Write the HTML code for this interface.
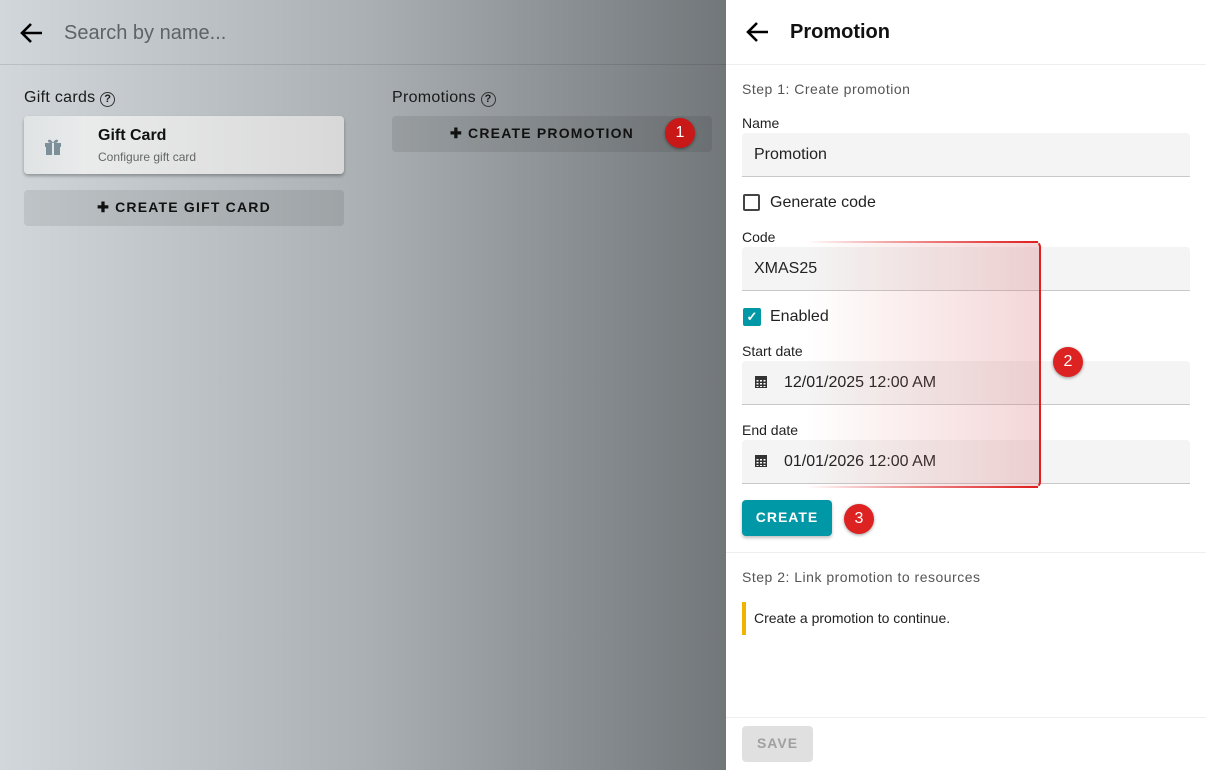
<!DOCTYPE html>
<html><head><style>
*{box-sizing:border-box;margin:0;padding:0}
body{width:1206px;height:770px;overflow:hidden;font-family:"Liberation Sans",Roboto,sans-serif;position:relative;background:#fff}
.left{position:absolute;left:0;top:0;width:726px;height:770px;background:linear-gradient(90deg,#d1d7da 0%,#aab0b3 50%,#72777a 100%)}
.abs{position:absolute}
.btnflat{position:absolute;background:rgba(0,0,0,0.08);border-radius:4px;font-size:14px;font-weight:bold;letter-spacing:1.2px;color:#111;text-align:center}
.right{position:absolute;left:726px;top:0;width:480px;height:770px;background:#fff}
.lbl{position:absolute;left:16px;font-size:14px;color:#222}
.inp{position:absolute;left:16px;width:448px;height:44px;background:#f4f4f4;border-bottom:1px solid #c8c8c8;border-radius:4px 4px 0 0;font-size:16px;color:#222;padding:13px 12px}
.badge{position:absolute;width:30px;height:30px;border-radius:50%;background:#d42222;color:#fff;font-size:16px;text-align:center;line-height:30px;box-shadow:0 1px 3px rgba(0,0,0,.4)}
.q{border:1.5px solid #333;border-radius:50%;display:inline-block;width:15px;height:15px;line-height:12px;text-align:center;font-size:11px;font-weight:bold;vertical-align:0px}
.cal{display:inline-block;vertical-align:-2px;margin-right:16px}
</style></head><body>
<div class="left">
 <svg class="abs" style="left:20px;top:22px" width="24" height="22" viewBox="0 0 24 22"><path d="M22 11H3M11 2L2 11l9 9" stroke="#000" stroke-width="2.6" fill="none"/></svg>
 <div class="abs" style="left:64px;top:22px;font-size:20px;color:#5d6366">Search by name...</div>
 <div class="abs" style="left:0;top:64px;width:726px;height:1px;background:rgba(0,0,0,0.1)"></div>
 <div class="abs" style="left:24px;top:89px;font-size:16px;color:#1a1a1a;letter-spacing:.3px">Gift cards <span class="q">?</span></div>
 <div class="abs" style="left:392px;top:89px;font-size:16px;color:#1a1a1a;letter-spacing:.3px">Promotions <span class="q">?</span></div>
 <div class="abs" style="left:24px;top:116px;width:320px;height:58px;border-radius:4px;background:linear-gradient(90deg,#eeefef,#d8d8d8);box-shadow:0 2px 3px rgba(0,0,0,.3);overflow:hidden">
  <div class="abs" style="left:0;top:0;width:58px;height:58px;background:linear-gradient(90deg,#e0e3e4,#e8eaeb)"></div>
  <svg class="abs" style="left:20px;top:22px" width="18" height="17" viewBox="0 0 18 17"><rect x="1" y="5" width="16" height="4" fill="#7d8f99"/><rect x="2" y="9" width="14" height="8" fill="#7d8f99"/><rect x="8" y="5" width="2" height="12" fill="#e4e7e8"/><path d="M9 5C7 1 4 1 4 3s3 2 5 2zM9 5c2-4 5-4 5-2s-3 2-5 2z" fill="#7d8f99"/></svg>
  <div class="abs" style="left:74px;top:11px;font-size:16px;font-weight:bold;color:#111">Gift Card</div>
  <div class="abs" style="left:74px;top:34px;font-size:12px;color:#666">Configure gift card</div>
 </div>
 <div class="btnflat" style="left:24px;top:190px;width:320px;height:36px;line-height:35px">✚ CREATE GIFT CARD</div>
 <div class="btnflat" style="left:392px;top:116px;width:320px;height:36px;line-height:34px;padding-right:20px">✚ CREATE PROMOTION</div>
 <div class="badge" style="left:665px;top:118px;background:#c81818">1</div>
</div>
<div class="right">
 <svg class="abs" style="left:20px;top:21px" width="24" height="22" viewBox="0 0 24 22"><path d="M22 11H3M11 2L2 11l9 9" stroke="#000" stroke-width="2.6" fill="none"/></svg>
 <div class="abs" style="left:64px;top:21px;font-size:20px;font-weight:bold;color:#111">Promotion</div>
 <div class="abs" style="left:0;top:64px;width:480px;height:1px;background:#eee"></div>
 <div class="abs" style="left:16px;top:81px;font-size:14px;color:#555;letter-spacing:.5px">Step 1: Create promotion</div>
 <div class="lbl" style="top:115px">Name</div>
 <div class="inp" style="top:133px">Promotion</div>
 <div class="abs" style="left:17px;top:194px;width:17px;height:17px;border:2px solid #444;border-radius:2px"></div>
 <div class="abs" style="left:44px;top:194px;font-size:16px;color:#222">Generate code</div>
 <div class="lbl" style="top:229px">Code</div>
 <div class="inp" style="top:247px">XMAS25</div>
 <div class="abs" style="left:17px;top:308px;width:18px;height:18px;background:#0097a7;border-radius:2px;color:#fff;font-size:13px;text-align:center;line-height:18px;font-weight:bold">✓</div>
 <div class="abs" style="left:44px;top:308px;font-size:16px;color:#222">Enabled</div>
 <div class="lbl" style="top:343px">Start date</div>
 <div class="inp" style="top:361px"><svg class="cal" width="14" height="14" viewBox="0 0 14 14"><rect x="1" y="1" width="12" height="12" fill="#333"/><g fill="#fff"><rect x="2.5" y="5" width="2" height="1.5"/><rect x="6" y="5" width="2" height="1.5"/><rect x="9.5" y="5" width="2" height="1.5"/><rect x="2.5" y="8" width="2" height="1.5"/><rect x="6" y="8" width="2" height="1.5"/><rect x="9.5" y="8" width="2" height="1.5"/><rect x="2.5" y="11" width="2" height="1"/><rect x="6" y="11" width="2" height="1"/><rect x="9.5" y="11" width="2" height="1"/></g></svg>12/01/2025 12:00 AM</div>
 <div class="lbl" style="top:422px">End date</div>
 <div class="inp" style="top:440px"><svg class="cal" width="14" height="14" viewBox="0 0 14 14"><rect x="1" y="1" width="12" height="12" fill="#333"/><g fill="#fff"><rect x="2.5" y="5" width="2" height="1.5"/><rect x="6" y="5" width="2" height="1.5"/><rect x="9.5" y="5" width="2" height="1.5"/><rect x="2.5" y="8" width="2" height="1.5"/><rect x="6" y="8" width="2" height="1.5"/><rect x="9.5" y="8" width="2" height="1.5"/><rect x="2.5" y="11" width="2" height="1"/><rect x="6" y="11" width="2" height="1"/><rect x="9.5" y="11" width="2" height="1"/></g></svg>01/01/2026 12:00 AM</div>
 <div class="abs" style="left:80px;top:241px;width:235px;height:247px;background:linear-gradient(90deg,rgba(230,140,140,0) 0%,rgba(225,120,120,0.12) 40%,rgba(215,110,115,0.28) 100%);border:2px solid #e02020;border-left:none;border-top-color:transparent;border-bottom-color:transparent;border-radius:0 6px 6px 0"></div>
 <div class="abs" style="left:80px;top:241px;width:232px;height:2px;background:linear-gradient(90deg,rgba(230,30,30,0),#e02020)"></div>
 <div class="abs" style="left:80px;top:486px;width:232px;height:2px;background:linear-gradient(90deg,rgba(230,30,30,0),#e02020)"></div>
 <div class="badge" style="left:327px;top:347px;background:#dd2222">2</div>
 <div class="abs" style="left:16px;top:500px;width:90px;height:36px;background:#0097a7;border-radius:4px;color:#fff;font-size:14px;font-weight:bold;letter-spacing:1px;text-align:center;line-height:35px;box-shadow:0 2px 3px rgba(0,0,0,.25)">CREATE</div>
 <div class="badge" style="left:118px;top:504px;background:#dd2222">3</div>
 <div class="abs" style="left:0;top:552px;width:480px;height:1px;background:#eee"></div>
 <div class="abs" style="left:16px;top:569px;font-size:14px;color:#555;letter-spacing:.5px">Step 2: Link promotion to resources</div>
 <div class="abs" style="left:16px;top:602px;width:4px;height:33px;background:#f0b400"></div>
 <div class="abs" style="left:28px;top:610px;font-size:14px;color:#222">Create a promotion to continue.</div>
 <div class="abs" style="left:0;top:717px;width:480px;height:1px;background:#eee"></div>
 <div class="abs" style="left:16px;top:726px;width:71px;height:36px;background:#e0e0e0;border-radius:4px;color:#a0a0a0;font-size:14px;font-weight:bold;letter-spacing:1px;text-align:center;line-height:35px">SAVE</div>
</div>
</body></html>
